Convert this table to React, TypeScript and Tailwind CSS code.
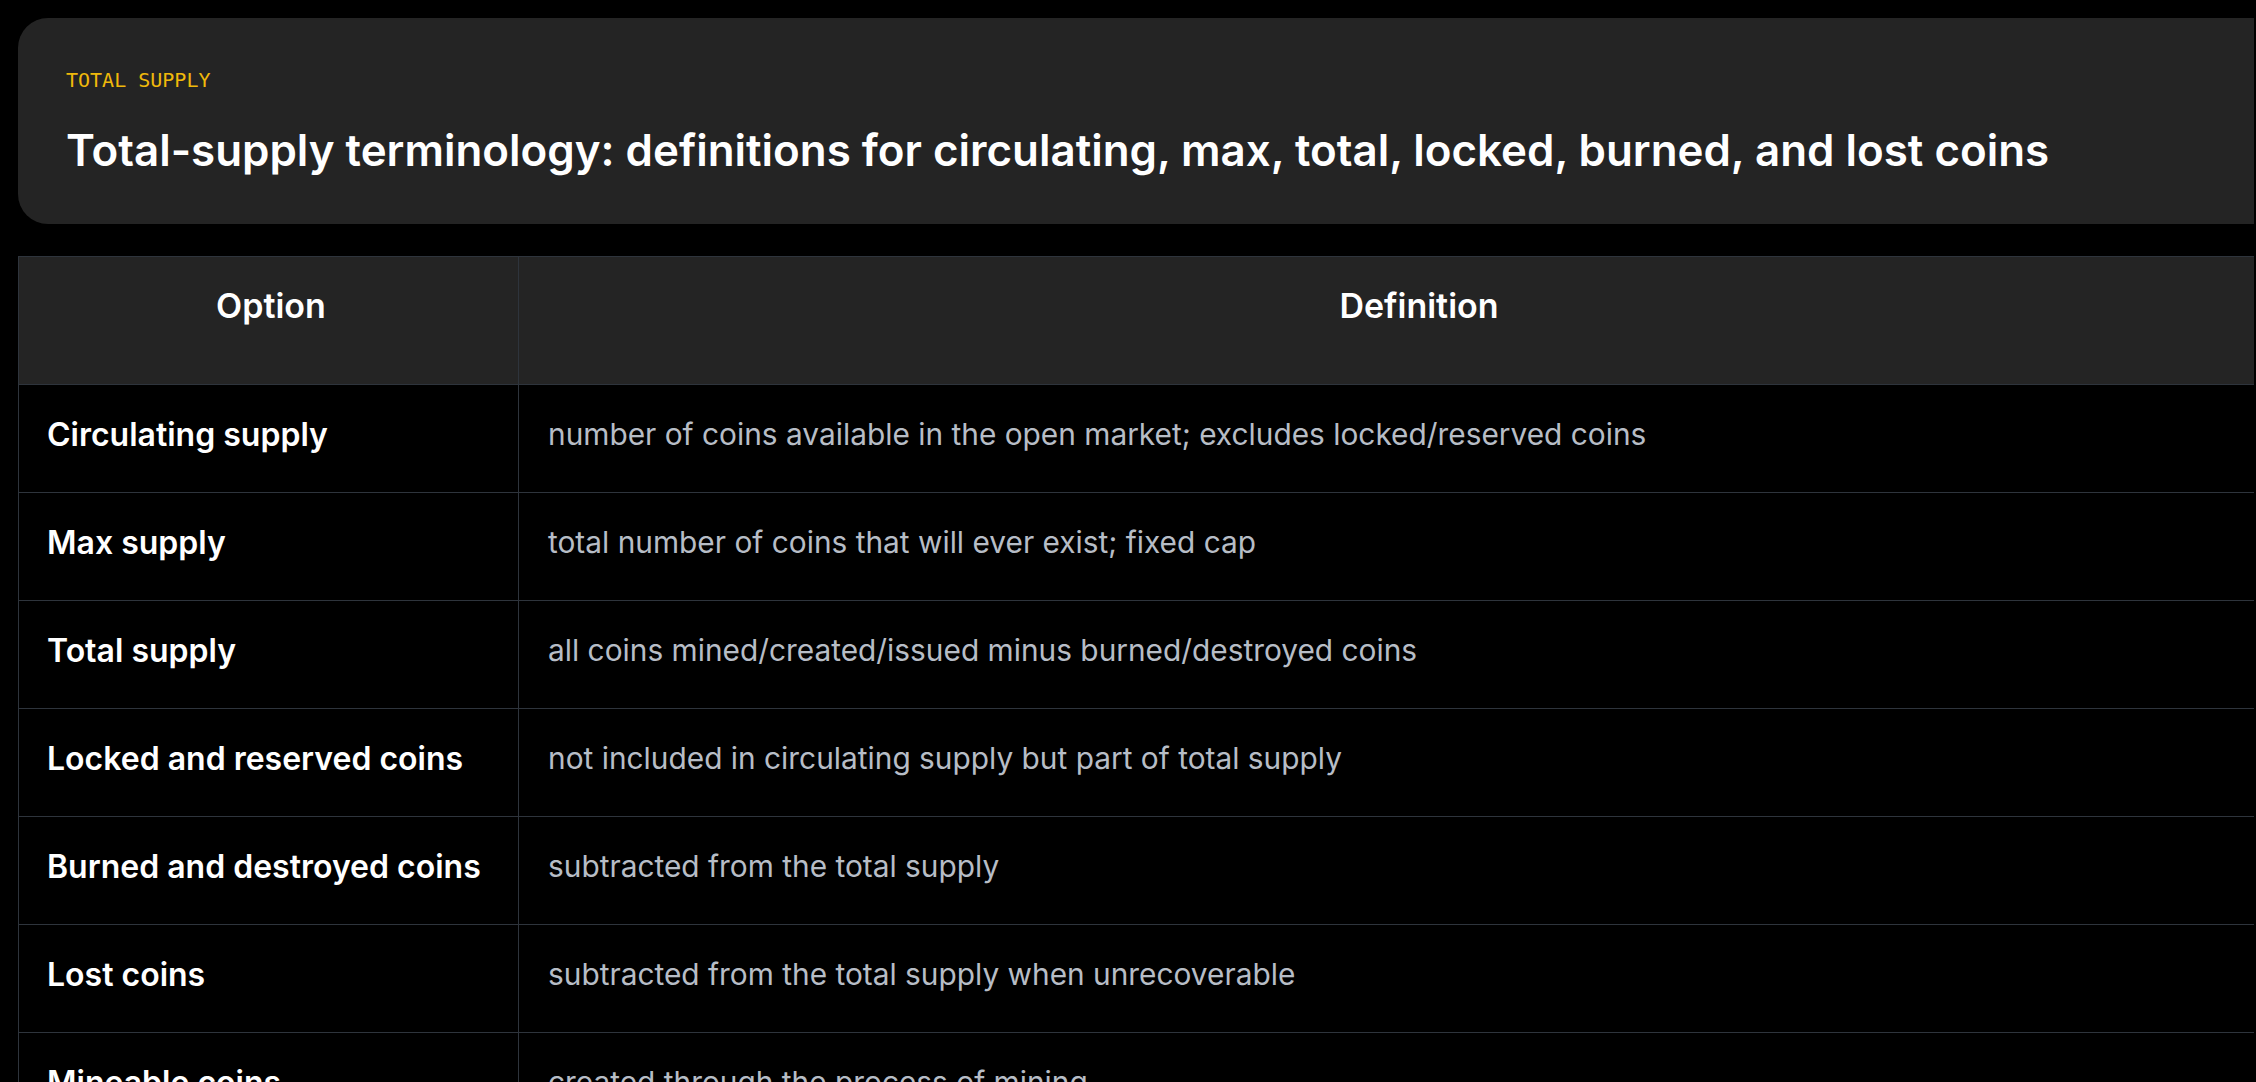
import React from "react";

const rows = [
  { option: "Circulating supply", definition: "number of coins available in the open market; excludes locked/reserved coins" },
  { option: "Max supply", definition: "total number of coins that will ever exist; fixed cap" },
  { option: "Total supply", definition: "all coins mined/created/issued minus burned/destroyed coins" },
  { option: "Locked and reserved coins", definition: "not included in circulating supply but part of total supply" },
  { option: "Burned and destroyed coins", definition: "subtracted from the total supply" },
  { option: "Lost coins", definition: "subtracted from the total supply when unrecoverable" },
  { option: "Mineable coins", definition: "created through the process of mining" },
];

export default function App() {
  return (
    <div className="h-screen w-full overflow-hidden bg-black pl-[18px] pt-[18px] font-['Inter',sans-serif]">
      {/* clip the right side, content is wider than the window */}
      <div className="w-[2236px] overflow-hidden">
        <div className="w-[2302px]">
          {/* Header card */}
          <div className="flex h-[206px] flex-col rounded-[30px] bg-[#242424] px-[48px] pt-[52px]">
            <span className="font-['DejaVu_Sans_Mono',monospace] text-[20px] leading-[20px] text-[#f0b90b]">
              TOTAL SUPPLY
            </span>
            <h1 className="mt-[34px] text-[43.9px] font-semibold leading-[1.2] text-white">
              Total-supply terminology: definitions for circulating, max, total, locked, burned, and lost coins
            </h1>
          </div>

          {/* Table */}
          <div className="mt-[32px] border-l border-r border-t border-[#2e343c]">
            <div className="grid h-[128px] grid-cols-[500px_1fr] border-b border-[#2e343c] bg-[#242424]">
              <div className="border-r border-[#2e343c] pl-[5px] pt-[25px] text-center text-[34px] font-semibold leading-[1.4] text-white">
                Option
              </div>
              <div className="pt-[25px] text-center text-[34px] font-semibold leading-[1.4] text-white">
                Definition
              </div>
            </div>
            {rows.map((r) => (
              <div key={r.option} className="grid h-[108px] grid-cols-[500px_1fr] border-b border-[#2e343c]">
                <div className="flex items-center border-r border-[#2e343c] px-[28px] pb-[7px] text-[32px] font-semibold text-white">
                  {r.option}
                </div>
                <div className="flex items-center pl-[29px] pr-[28px] pb-[8px] text-[29.85px] text-[#b7bdc6]">
                  {r.definition}
                </div>
              </div>
            ))}
          </div>
        </div>
      </div>
    </div>
  );
}
